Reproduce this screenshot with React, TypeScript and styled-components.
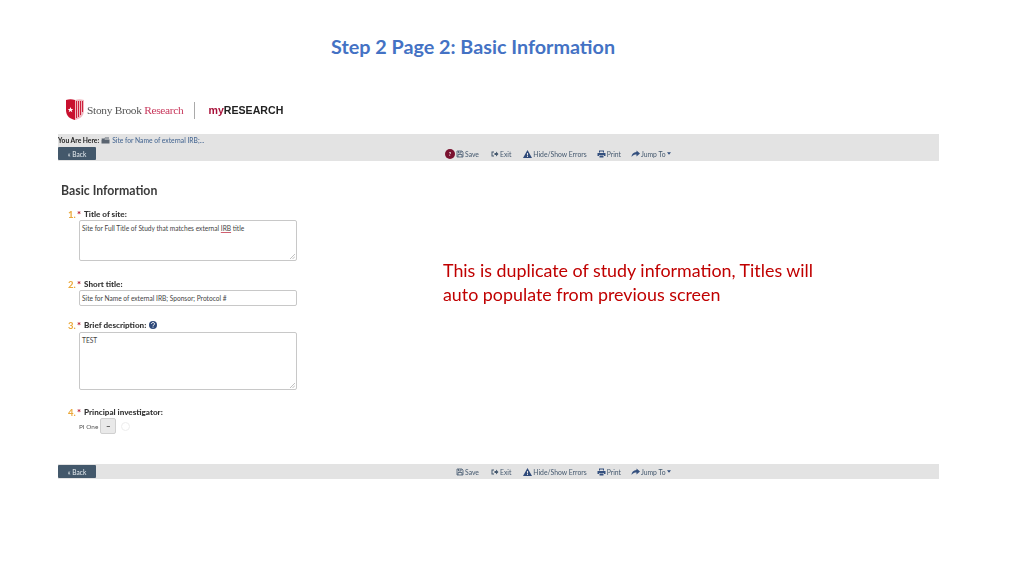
import React from 'react';
import styled, { createGlobalStyle } from 'styled-components';

const GlobalStyle = createGlobalStyle`
  html, body {
    margin: 0;
    padding: 0;
    background: #ffffff;
  }
`;

const Slide = styled.div`
  width: 1024px;
  height: 576px;
  overflow: hidden;
  background: #ffffff;
  font-family: "Lato", "Liberation Sans", sans-serif;
`;

const Heading = styled.h1`
  margin: 0;
  padding: 35px 0 0 331px;
  height: 92px;
  box-sizing: border-box;
  font-size: 19.75px;
  line-height: 24px;
  font-weight: 700;
  color: #4472c4;
`;

const Shot = styled.div`
  margin-left: 58px;
  width: 881px;
  filter: blur(0.3px);
`;

const LogoRow = styled.div`
  display: flex;
  align-items: center;
  height: 36px;
  margin-bottom: 6px;
  padding-left: 8px;
`;

const OrgName = styled.span`
  margin-left: 3px;
  font-family: "Liberation Serif", serif;
  font-size: 11.4px;
  letter-spacing: -0.3px;
  color: #555;
  white-space: nowrap;
`;

const OrgAccent = styled.span`
  color: #c8385c;
`;

const LogoRule = styled.div`
  width: 1px;
  height: 17px;
  margin: 0 14px 0 10px;
  background: #aaa;
`;

const Product = styled.span`
  font-family: "Liberation Sans", sans-serif;
  font-size: 10.6px;
  font-weight: 700;
  color: #222;
  white-space: nowrap;
`;

const ProductAccent = styled.span`
  color: #a8123a;
`;

const TopBar = styled.div`
  height: 27px;
  background: #e3e3e3;
  display: flex;
  flex-direction: column;
`;

const Crumb = styled.div`
  height: 12px;
  display: flex;
  align-items: center;
  gap: 2px;
  font-size: 6.7px;
  white-space: nowrap;
`;

const CrumbLabel = styled.b`
  color: #222;
`;

const CrumbLink = styled.span`
  color: #4a6a94;
  font-weight: 500;
`;

const BarRow = styled.div`
  display: flex;
  align-items: center;
  height: 15px;
`;

const BackButton = styled.div`
  flex: none;
  width: 38px;
  height: 13px;
  border-radius: 1px;
  background: #43586b;
  color: #e8edf1;
  font-size: 6.6px;
  display: flex;
  align-items: center;
  justify-content: center;
`;

const ToolGroup = styled.div<{ $offset: number }>`
  display: flex;
  align-items: center;
  margin-left: ${(p) => p.$offset}px;
`;

const Badge = styled.div`
  width: 10px;
  height: 10px;
  margin-right: 1px;
  border-radius: 50%;
  background: #7a1230;
  color: #fff;
  font-size: 5px;
  font-weight: 700;
  display: flex;
  align-items: center;
  justify-content: center;
`;

const Tool = styled.div<{ $gap: number }>`
  display: flex;
  align-items: center;
  gap: 1px;
  margin-right: ${(p) => p.$gap}px;
  font-size: 6.8px;
  color: #44586e;
  white-space: nowrap;
`;

const Body = styled.div`
  display: grid;
  grid-template-columns: 385px 1fr;
  height: 303px;
`;

const Form = styled.div`
  padding: 23px 0 0 3px;
`;

const FormTitle = styled.h2`
  margin: 0 0 10px;
  font-size: 12.3px;
  line-height: 14px;
  font-weight: 700;
  color: #3b3b3b;
`;

const Question = styled.div<{ $gap: number }>`
  margin-bottom: ${(p) => p.$gap}px;
`;

const Label = styled.div`
  display: flex;
  align-items: center;
  height: 12px;
  margin-left: 7px;
  font-size: 8.1px;
  font-weight: 900;
  color: #333;
  white-space: nowrap;
`;

const Num = styled.span`
  color: #eba83a;
  font-size: 9.5px;
  font-weight: 700;
  width: 9px;
`;

const Star = styled.span`
  color: #b5182f;
  width: 7px;
  font-size: 9.5px;
`;

const Field = styled.div<{ $h: number; $top?: number }>`
  position: relative;
  margin: ${(p) => p.$top ?? 0}px 0 0 18px;
  width: 218px;
  height: ${(p) => p.$h}px;
  border: 1px solid #c8c8c8;
  border-radius: 2px;
  padding: 3px 0 0 2px;
  box-sizing: border-box;
  font-size: 6.6px;
  line-height: 9px;
  color: #444;
  background: #fff;
  white-space: nowrap;
`;

const Grip = styled.svg`
  position: absolute;
  right: 1px;
  bottom: 1px;
  width: 5px;
  height: 5px;
`;

const Squiggle = styled.span`
  text-decoration: underline #d06070 0.6px;
`;

const PiRow = styled.div`
  display: flex;
  align-items: center;
  gap: 2px;
  margin-left: 18px;
  font-size: 6.4px;
  color: #555;
`;

const RemoveButton = styled.div`
  width: 16px;
  height: 16px;
  border: 1px solid #d0d0d0;
  border-radius: 2px;
  background: #e9e9e9;
  box-sizing: border-box;
  color: #333;
  font-size: 8px;
  font-weight: 900;
  display: flex;
  align-items: center;
  justify-content: center;
`;

const InfoGhost = styled.div`
  width: 7px;
  height: 7px;
  margin-left: 3px;
  border: 1px solid #ececec;
  border-radius: 50%;
`;

const HelpBadge = styled.svg`
  width: 8px;
  height: 8px;
  margin-left: 3px;
`;

const Note = styled.p`
  margin: 0;
  padding-top: 97px;
  font-size: 17.85px;
  line-height: 24px;
  color: #c00000;
  white-space: nowrap;
`;

const BottomBar = styled.div`
  width: 881px;
  height: 15px;
  background: #e3e3e3;
  display: flex;
  align-items: center;
`;

const SaveIcon = () => (
  <svg width="8" height="8" viewBox="0 0 16 16" fill="none" stroke="#44586e" strokeWidth="1.6">
    <path d="M2 2h10l2 2v10H2z" />
    <path d="M5 2v4h5V2M4 14V9h8v5" />
  </svg>
);

const ExitIcon = () => (
  <svg width="8" height="8" viewBox="0 0 16 16" fill="#44586e">
    <path d="M1 3h5v2H3v6h3v2H1z" />
    <path d="M7 6h3V3l5 5-5 5v-3H7z" />
  </svg>
);

const WarnIcon = () => (
  <svg width="9" height="8" viewBox="0 0 18 16" fill="#2f4a7a">
    <path d="M9 0l9 16H0zM8 6v5h2V6zm0 6v2h2v-2z" fillRule="evenodd" />
  </svg>
);

const PrintIcon = () => (
  <svg width="9" height="8" viewBox="0 0 18 16" fill="#34507e">
    <path d="M4 1h10v4H12V3H6v2H4zM1 6h16v6h-3v-2H4v2H1zM5 11h8v4H5z" />
  </svg>
);

const JumpIcon = () => (
  <svg width="9" height="8" viewBox="0 0 18 16" fill="#34507e">
    <path d="M11 1l7 6-7 6V9C7 9 4 10 1 14c0-6 4-9 10-10z" />
  </svg>
);

const Caret = () => (
  <svg width="4" height="3" viewBox="0 0 8 5" fill="#34507e">
    <path d="M0 0h8L4 5z" />
  </svg>
);

const FolderIcon = () => (
  <svg width="9" height="8" viewBox="0 0 18 16" fill="#5a6470">
    <path d="M1 5h6l1-2h8v2H8L7 7H2zM1 7h16v8H1z" />
  </svg>
);

const HelpIcon = () => (
  <HelpBadge viewBox="0 0 16 16">
    <circle cx="8" cy="8" r="8" fill="#2f4a7a" />
    <path d="M5 6c0-4 6-4 6 0 0 2-3 2-3 4" fill="none" stroke="#fff" strokeWidth="2" />
    <rect x="7" y="11.2" width="2" height="2" fill="#fff" />
  </HelpBadge>
);

const Shield = () => (
  <svg width="18" height="22" viewBox="0 0 18 22">
    <path d="M0 1c3-1 6-1 9 0v20C4 20 0 17 0 11z" fill="#c8102e" />
    <path d="M9 1c3-1 6-1 9 0v10c0 6-4 9-9 10z" fill="#f0b8c0" />
    <path d="M10.5 2v17M12.5 2v16M14.5 2v14M16.5 2v11" stroke="#c8102e" strokeWidth="0.9" />
    <path d="M4.5 8l.8 2h2l-1.6 1.3.6 2-1.8-1.2-1.8 1.2.6-2L1.7 10h2z" fill="#fff" />
  </svg>
);

function Tools() {
  return (
    <>
      <Tool $gap={12}><SaveIcon />Save</Tool>
      <Tool $gap={12}><ExitIcon />Exit</Tool>
      <Tool $gap={10}><WarnIcon />Hide/Show Errors</Tool>
      <Tool $gap={10}><PrintIcon />Print</Tool>
      <Tool $gap={0}><JumpIcon />Jump To<Caret /></Tool>
    </>
  );
}

const ResizeGrip = () => (
  <Grip viewBox="0 0 5 5">
    <path d="M0 5l5-5M2.5 5L5 2.5" stroke="#999" strokeWidth="0.6" />
  </Grip>
);

export default function App() {
  return (
    <Slide>
      <GlobalStyle />
      <Heading>Step 2 Page 2: Basic Information</Heading>
      <Shot>
        <LogoRow>
          <Shield />
          <OrgName>Stony Brook <OrgAccent>Research</OrgAccent></OrgName>
          <LogoRule />
          <Product><ProductAccent>my</ProductAccent>RESEARCH</Product>
        </LogoRow>
        <TopBar>
          <Crumb>
            <CrumbLabel>You Are Here:</CrumbLabel>
            <FolderIcon />
            <CrumbLink>Site for Name of external IRB;...</CrumbLink>
          </Crumb>
          <BarRow>
            <BackButton>« Back</BackButton>
            <ToolGroup $offset={349}>
              <Badge>?</Badge>
              <Tools />
            </ToolGroup>
          </BarRow>
        </TopBar>
        <Body>
          <Form>
            <FormTitle>Basic Information</FormTitle>
            <Question $gap={17}>
              <Label><Num>1.</Num><Star>*</Star>Title of site:</Label>
              <Field $h={41}>
                Site for Full Title of Study that matches external <Squiggle>IRB</Squiggle> title
                <ResizeGrip />
              </Field>
            </Question>
            <Question $gap={13}>
              <Label><Num>2.</Num><Star>*</Star>Short title:</Label>
              <Field $h={16}>Site for Name of external IRB; Sponsor; Protocol #</Field>
            </Question>
            <Question $gap={16}>
              <Label><Num>3.</Num><Star>*</Star>Brief description:<HelpIcon /></Label>
              <Field $h={58} $top={1}>
                TEST
                <ResizeGrip />
              </Field>
            </Question>
            <Question $gap={0}>
              <Label><Num>4.</Num><Star>*</Star>Principal investigator:</Label>
              <PiRow>PI One<RemoveButton>–</RemoveButton><InfoGhost /></PiRow>
            </Question>
          </Form>
          <Note>
            This is duplicate of study information, Titles will<br />
            auto populate from previous screen
          </Note>
        </Body>
        <BottomBar>
          <BackButton>« Back</BackButton>
          <ToolGroup $offset={360}>
            <Tools />
          </ToolGroup>
        </BottomBar>
      </Shot>
    </Slide>
  );
}
